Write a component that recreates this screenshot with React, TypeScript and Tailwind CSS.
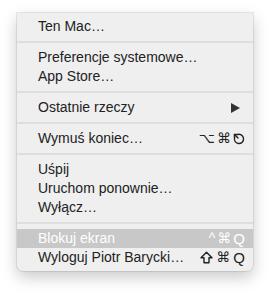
import React from "react";

type Item =
  | { sep: true }
  | { sep?: false; label: string; keys?: React.ReactNode; submenu?: boolean; active?: boolean };

function EscIcon() {
  return (
    <svg width="12" height="12" viewBox="0 0 12 12" fill="none" stroke="currentColor" strokeWidth="1.4" strokeLinecap="round">
      <path d="M4.2 1.7 A4.6 4.6 0 1 1 1.7 4.2" />
      <path d="M1.6 1.6 L5 5" />
      <path d="M1.4 1.4 L4.2 1.4 M1.4 1.4 L1.4 4.2" />
    </svg>
  );
}

function ShiftIcon() {
  return (
    <svg width="13" height="13" viewBox="0 0 13 13" fill="none" stroke="currentColor" strokeWidth="1.4" strokeLinejoin="round">
      <path d="M6.5 1.2 L12 6.8 L9 6.8 L9 11.8 L4 11.8 L4 6.8 L1 6.8 Z" />
    </svg>
  );
}

const sym = { fontFamily: '"DejaVu Sans", sans-serif' };

const items: Item[] = [
  { label: "Ten Mac…" },
  { sep: true },
  { label: "Preferencje systemowe…" },
  { label: "App Store…" },
  { sep: true },
  { label: "Ostatnie rzeczy", submenu: true },
  { sep: true },
  {
    label: "Wymuś koniec…",
    keys: (
      <span className="flex items-center gap-[2px]">
        <span style={sym}>⌥</span>
        <span style={sym}>⌘</span>
        <EscIcon />
      </span>
    ),
  },
  { sep: true },
  { label: "Uśpij" },
  { label: "Uruchom ponownie…" },
  { label: "Wyłącz…" },
  { sep: true },
  {
    label: "Blokuj ekran",
    active: true,
    keys: (
      <span className="flex items-center gap-[2px]">
        <span>^</span>
        <span style={sym}>⌘</span>
        <span className="text-[15px]">Q</span>
      </span>
    ),
  },
  {
    label: "Wyloguj Piotr Barycki…",
    keys: (
      <span className="flex items-center gap-[3px]">
        <ShiftIcon />
        <span style={sym}>⌘</span>
        <span className="text-[15px]">Q</span>
      </span>
    ),
  },
];

export default function App() {
  return (
    <div className="w-[270px] h-[292px] bg-white overflow-hidden pt-[13px] pl-[17px]">
      <div
        className="w-[236px] bg-[#efefef] rounded-b-[6px] py-[4px] shadow-[0_6px_16px_rgba(0,0,0,0.22),0_0_0_1px_rgba(0,0,0,0.08)] text-[14px] text-[#222]"
        style={{ fontFamily: '"Liberation Sans", "DejaVu Sans", sans-serif' }}
      >
        {items.map((it, i) =>
          it.sep ? (
            <div key={i} className="h-[12px] flex items-center">
              <div className="w-full h-[2px] bg-[#dedede]" />
            </div>
          ) : (
            <div
              key={i}
              className={
                "h-[19px] leading-[19px] flex items-center justify-between pl-[21px] pr-[8px] " +
                (it.active ? "bg-[#c8c8c8] text-white" : "")
              }
            >
              <span>{it.label}</span>
              {it.submenu && (
                <svg width="9" height="10" viewBox="0 0 9 10" className="mr-[5px]">
                  <path d="M0 0 L9 5 L0 10 Z" fill="#333" />
                </svg>
              )}
              {it.keys}
            </div>
          )
        )}
      </div>
    </div>
  );
}
